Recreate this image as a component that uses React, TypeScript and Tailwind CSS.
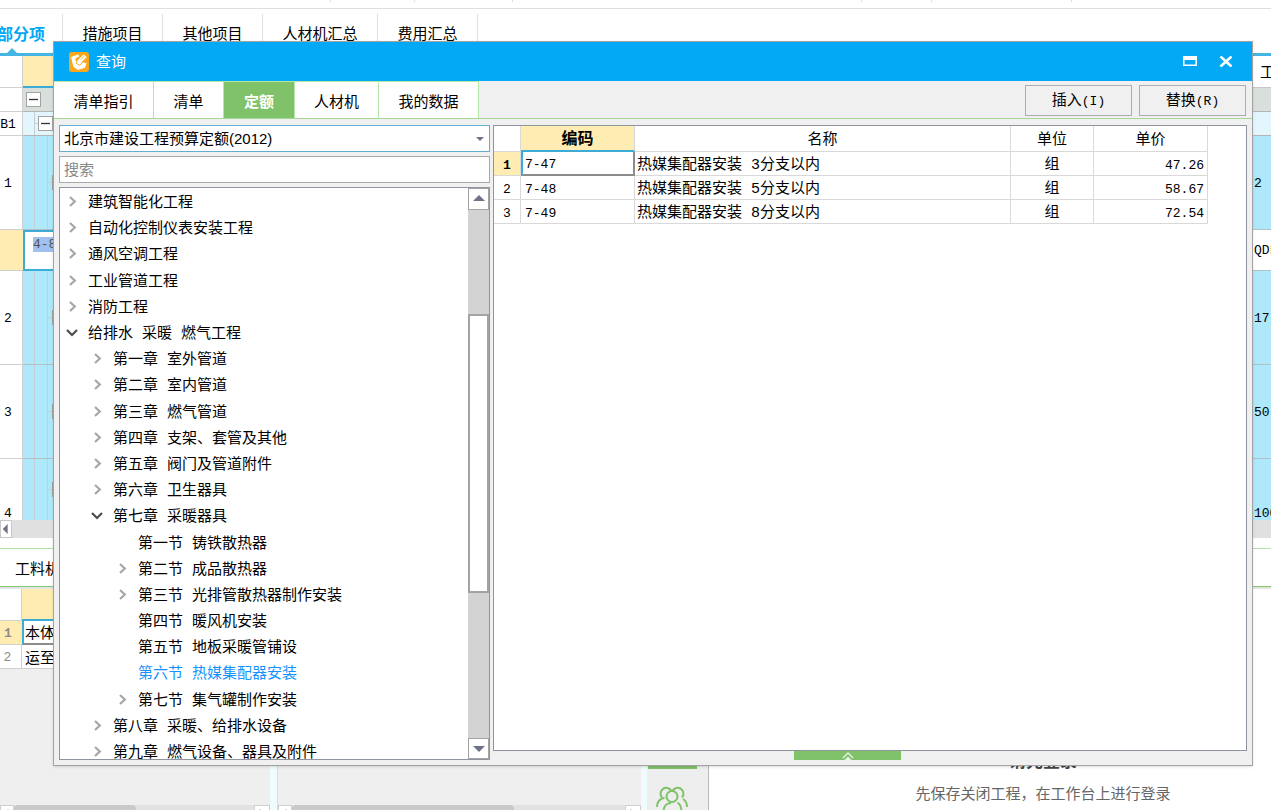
import { useState } from "react";
import clsx from "clsx";

type TreeNode = { label: string; level: 0 | 1 | 2; state: "open" | "closed" | "leaf" };

const tree: TreeNode[] = [
  { label: "建筑智能化工程", level: 0, state: "closed" },
  { label: "自动化控制仪表安装工程", level: 0, state: "closed" },
  { label: "通风空调工程", level: 0, state: "closed" },
  { label: "工业管道工程", level: 0, state: "closed" },
  { label: "消防工程", level: 0, state: "closed" },
  { label: "给排水 采暖 燃气工程", level: 0, state: "open" },
  { label: "第一章 室外管道", level: 1, state: "closed" },
  { label: "第二章 室内管道", level: 1, state: "closed" },
  { label: "第三章 燃气管道", level: 1, state: "closed" },
  { label: "第四章 支架、套管及其他", level: 1, state: "closed" },
  { label: "第五章 阀门及管道附件", level: 1, state: "closed" },
  { label: "第六章 卫生器具", level: 1, state: "closed" },
  { label: "第七章 采暖器具", level: 1, state: "open" },
  { label: "第一节 铸铁散热器", level: 2, state: "leaf" },
  { label: "第二节 成品散热器", level: 2, state: "closed" },
  { label: "第三节 光排管散热器制作安装", level: 2, state: "closed" },
  { label: "第四节 暖风机安装", level: 2, state: "leaf" },
  { label: "第五节 地板采暖管铺设", level: 2, state: "leaf" },
  { label: "第六节 热媒集配器安装", level: 2, state: "leaf" },
  { label: "第七节 集气罐制作安装", level: 2, state: "closed" },
  { label: "第八章 采暖、给排水设备", level: 1, state: "closed" },
  { label: "第九章 燃气设备、器具及附件", level: 1, state: "closed" },
];

const indent = ["pl-[6px]", "pl-[31px]", "pl-[56px]"];

const quotas = [
  { code: "7-47", name: "热媒集配器安装 3分支以内", unit: "组", price: "47.26" },
  { code: "7-48", name: "热媒集配器安装 5分支以内", unit: "组", price: "58.67" },
  { code: "7-49", name: "热媒集配器安装 8分支以内", unit: "组", price: "72.54" },
];

const pageTabs = [
  { label: "措施项目", width: "w-[100px]" },
  { label: "其他项目", width: "w-[100px]" },
  { label: "人材机汇总", width: "w-[115px]" },
  { label: "费用汇总", width: "w-[100px]" },
];

const dialogTabs = [
  { label: "清单指引", width: "w-[100px]" },
  { label: "清单", width: "w-[70px]" },
  { label: "定额", width: "w-[71px]" },
  { label: "人材机", width: "w-[84px]" },
  { label: "我的数据", width: "w-[100px]" },
];

function Chevron({ state }: { state: TreeNode["state"] }) {
  return (
    <svg className="size-3 shrink-0" viewBox="0 0 12 12" fill="none" strokeWidth="2.2">
      {state === "closed" && <path d="M4 1 8.800 5.500 4 10" stroke="#a6a6a6" />}
      {state === "open" && <path d="M1 3 6 8 11 3" stroke="#4d4d4d" />}
    </svg>
  );
}

function Arrow({ dir, className }: { dir: "up" | "down" | "left" | "right"; className?: string }) {
  const points = {
    up: "0,8 6,2 12,8",
    down: "0,3 12,3 6,9",
    left: "8,0 2,6 8,12",
    right: "4,0 10,6 4,12",
  };
  return (
    <svg className={clsx("shrink-0", className)} viewBox="0 0 12 12" fill="#6f7388">
      <polygon points={points[dir]} />
    </svg>
  );
}

function Toggle() {
  return (
    <svg className="size-[15px] shrink-0" viewBox="0 0 15 15">
      <rect x="0.5" y="0.5" width="14" height="14" fill="#fff" stroke="#a3a3a3" />
      <path d="M3 7.5h9" stroke="#333" strokeWidth="1.3" />
    </svg>
  );
}

// guide lines of the outline column, with the box of a child item
function Branch({ height }: { height: string }) {
  return (
    <div className={clsx("flex items-center", height)}>
      <div className="h-full w-3 shrink-0 border-r border-[#c3cfd4]" />
      <div className="h-full w-[13px] shrink-0 border-r border-[#c3cfd4]" />
      <div className="h-px w-1 shrink-0 bg-[#c3cfd4]" />
      <div className="size-[15px] shrink-0 border border-[#a3a3a3] bg-white" />
    </div>
  );
}

const num = "border-r border-b border-[#d0d0d0] bg-white p-0 text-center";
const cyan = "border-b border-[#b4bfc4] bg-[#aee8fb] p-0";

function MainGrid() {
  const tall = [
    { n: "2", value: "17", height: "h-[93px]" },
    { n: "3", value: "50", height: "h-[93px]" },
  ];
  return (
    <table className="w-full shrink-0 table-fixed border-separate border-spacing-0 font-['Liberation_Mono','Noto_Sans_CJK_SC',monospace] text-[13px] leading-4">
      <colgroup>
        <col className="w-[23px]" />
        <col />
        <col className="w-[19px]" />
      </colgroup>
      <thead>
        <tr className="h-8">
          <th className={num} />
          <th className="border-b-2 border-[#3cabd6] bg-[#ffecb3] p-0" />
          <th className="overflow-hidden border-b border-[#c8c8c8] p-0 pt-1 pl-2 text-left text-[15px] font-normal">工</th>
        </tr>
      </thead>
      <tbody>
        <tr className="h-6">
          <td className={num} />
          <td className="border-b border-[#b5b5b5] bg-[#d9dfdb] p-0 pl-[3px]">
            <Toggle />
          </td>
          <td className="border-b border-[#b5b5b5] bg-[#d9dfdb] p-0" />
        </tr>
        <tr className="h-6">
          <td className={clsx(num, "pt-0.5 pr-1.5")}>B1</td>
          <td className="border-b border-[#b5b5b5] bg-[#e4f6fd] p-0">
            <div className="flex h-[23px] items-center">
              <div className="h-full w-3 border-r border-[#c3cfd4]" />
              <div className="h-px w-[3px] bg-[#c3cfd4]" />
              <Toggle />
            </div>
          </td>
          <td className="border-b border-[#b5b5b5] bg-[#e4f6fd] p-0" />
        </tr>
        <tr>
          <td className={clsx(num, "pt-0.5 pr-1.5")}>1</td>
          <td className={cyan}>
            <Branch height="h-[93px]" />
          </td>
          <td className={clsx(cyan, "pt-0.5 pl-0.5")}>2</td>
        </tr>
        <tr className="h-[41px]">
          <td className="border-b border-[#d0d0d0] bg-[#ffecb3] p-0" />
          <td className="border-2 border-[#3cabd6] bg-white p-0 pb-3 pl-2">
            <span className="bg-[#a0c1f0] text-[#555]">4-8</span>
          </td>
          <td className="overflow-hidden border-b border-[#b4bfc4] p-0 pt-0.5 pl-0.5">QDL</td>
        </tr>
        {tall.map((row) => (
          <tr key={row.n}>
            <td className={clsx(num, "pt-0.5 pr-1.5")}>{row.n}</td>
            <td className={cyan}>
              <Branch height={row.height} />
            </td>
            <td className={clsx(cyan, "pt-0.5 pl-0.5")}>{row.value}</td>
          </tr>
        ))}
        <tr className="leading-3">
          <td className="border-r border-[#d0d0d0] p-0 pr-1.5 text-center align-bottom">4</td>
          <td className="bg-[#aee8fb] p-0">
            <Branch height="h-[61px]" />
          </td>
          <td className="overflow-hidden bg-[#aee8fb] p-0 pl-0.5 align-bottom">100</td>
        </tr>
      </tbody>
    </table>
  );
}

function BottomScroll({ thumb }: { thumb: string }) {
  return (
    <div className="flex h-[5px] items-start overflow-hidden bg-[#e2e2e2]">
      <button aria-label="向左" className="h-4 w-[14px] border border-[#d0d0d0] bg-white">
        <Arrow dir="left" className="ml-0.5 size-2" />
      </button>
      <div className={clsx("h-4 rounded-sm bg-[#c9c9c9]", thumb)} />
      <div className="flex-1" />
      <button aria-label="向右" className="h-4 w-4 border border-[#d0d0d0] bg-white">
        <Arrow dir="right" className="ml-0.5 size-2" />
      </button>
    </div>
  );
}

function LowerPane() {
  return (
    <div className="flex min-h-0 flex-1">
      <div className="flex w-[270px] flex-col bg-[#efefef]">
        <table className="w-full table-fixed border-separate border-spacing-0 text-[15px]">
          <colgroup>
            <col className="w-[22px]" />
            <col />
          </colgroup>
          <thead>
            <tr className="h-8">
              <th className={num} />
              <th className="border-b-2 border-[#3cabd6] bg-[#ffecb3] p-0" />
            </tr>
          </thead>
          <tbody>
            <tr className="h-6">
              <td className="border-b border-[#d0d0d0] bg-[#ffecb3] p-0 pt-0.5 pr-1.5 text-center font-['Liberation_Mono',monospace] text-[13px] leading-5 font-bold text-[#8c8c8c]">
                1
              </td>
              <td className="border-b-2 border-l-2 border-b-[#8c8c8c] border-l-[#3cabd6] bg-white p-0 pt-0.5 pl-px leading-5">
                本体安装
              </td>
            </tr>
            <tr className="h-6">
              <td className={clsx(num, "pt-0.5 pr-1.5 font-['Liberation_Mono',monospace] text-[13px] leading-5 text-[#8c8c8c]")}>
                2
              </td>
              <td className="border-b border-[#d0d0d0] bg-white p-0 pt-0.5 pl-[3px] leading-5">运至现场</td>
            </tr>
          </tbody>
        </table>
        <div className="flex-1" />
        <BottomScroll thumb="w-[122px]" />
      </div>
      <div className="w-[7px] bg-[#effbff]" />
      <div className="flex w-[364px] flex-col justify-end border-l border-[#dcdcdc] bg-[#efefef]">
        <BottomScroll thumb="w-[222px]" />
      </div>
      <div className="w-1.5 bg-[#effbff]" />
      <div className="flex w-[62px] flex-col justify-end border-r border-[#b8b8b8] bg-[#eeeeee]">
        <div className="mb-4 ml-px h-2 w-[49px] bg-[#7fc269]" />
        <button aria-label="联系人" className="ml-[9px] h-[25px] w-8 overflow-hidden">
          <svg className="h-[30px] w-8" viewBox="0 0 32 30" fill="none" stroke="#7fc269" strokeWidth="2">
            <path d="M6 12.500a5.800 5.800 0 1 1 9.500-6.500" />
            <path d="M16.500 6a5.800 5.800 0 1 1 9.500 6.500" />
            <circle cx="16" cy="11.5" r="5.5" />
            <path d="M1 22c0-5 3-8.500 7.500-9.300" />
            <path d="M31 22c0-3.500-1.500-6.500-4-8" />
            <path d="M7.500 27c0-5.500 3-9 7.500-9" />
            <path d="M21.500 17.500c3 2 4 5 4 9.500" />
          </svg>
        </button>
      </div>
      <div className="flex flex-1 flex-col items-center justify-end gap-2 pb-1 pl-[106px]">
        <h2 className="text-[17px] leading-6 font-bold text-[#444]">请先登录</h2>
        <p className="text-[15px] leading-6 text-[#666]">先保存关闭工程，在工作台上进行登录</p>
      </div>
    </div>
  );
}

function Page() {
  return (
    <div className="flex h-full flex-col">
      <div className="flex h-[9px] shrink-0 items-start border-b border-[#dedede]">
        <div className="h-0.5 w-[331px] border-r border-[#dedede]" />
        <div className="h-0.5 w-[84px] border-r border-[#dedede]" />
        <div className="h-0.5 w-[98px] border-r border-[#dedede]" />
        <div className="h-0.5 w-[349px] border-r border-[#dedede]" />
        <div className="h-0.5 w-[70px] border-r border-[#dedede]" />
        <div className="h-0.5 w-[140px] border-r border-[#dedede]" />
      </div>
      <nav className="flex h-[47px] shrink-0 border-b-[3px] border-[#45b6e4] pt-[5px]">
        <button className="relative flex w-[63px] items-center justify-end border-r border-[#dedede] pt-0.5 pr-[17px] text-[16px] font-bold whitespace-nowrap text-[#03a9f4]">
          部分项
          <svg className="absolute bottom-0 left-[7px] h-[5px] w-2.5" viewBox="0 0 10 5" fill="#45b6e4">
            <polygon points="0,5 5,0 10,5" />
          </svg>
        </button>
        {pageTabs.map((tab) => (
          <button key={tab.label} className={clsx("border-r border-[#dedede] pt-0.5 text-[15px]", tab.width)}>
            {tab.label}
          </button>
        ))}
      </nav>
      <MainGrid />
      <div className="flex h-[18px] shrink-0 bg-[#e0e0e0]">
        <button aria-label="向左滚动" className="flex w-3 items-center border border-[#c8c8c8] bg-white">
          <Arrow dir="left" className="size-2.5" />
        </button>
      </div>
      <div className="h-[11px] shrink-0 border-b border-[#b4e2a6]" />
      <div className="flex h-[38px] shrink-0 items-center border-b border-[#7fc96c] pt-1 pl-[15px]">
        <button className="text-[15px]">工料机显示</button>
      </div>
      <div className="h-0.5 shrink-0 bg-[#e4e4e4]" />
      <LowerPane />
    </div>
  );
}

function TitleBar() {
  return (
    <header className="flex h-[39px] shrink-0 items-center bg-[#03a9f4] pr-[19px] pl-[15px] text-white">
      <svg className="size-5" viewBox="0 0 20 20">
        <rect width="20" height="20" rx="3" fill="#fba71b" />
        <path
          d="M2 5 9 2.500l1.500 1.700-4.300 2.500 1.200 3.800 5.800-.6 4.300 1.300-1.500 4.600-7 2.200-4.600-3.200z"
          fill="#fff"
        />
        <path d="m7 11 3.500 2.300L17 7" fill="none" stroke="#fba71b" strokeWidth="1" />
        <path d="m8.500 8.500 6-6 3.200 2.500-6.200 6.300-2.700.7z" fill="#fff" />
        <path d="m11.500 7.500 4-3.500" fill="none" stroke="#fba71b" strokeWidth="0.8" />
      </svg>
      <h1 className="ml-[7px] flex-1 pt-0.5 text-[15px]">查询</h1>
      <button aria-label="最大化" className="mr-[22px]">
        <svg className="h-[11px] w-[14px]" viewBox="0 0 14 11">
          <path d="M.8 1v8.200h12.400V1" fill="none" stroke="#fff" strokeWidth="1.500" />
          <rect width="14" height="4" fill="#fff" />
        </svg>
      </button>
      <button aria-label="关闭">
        <svg className="h-[11px] w-[14px]" viewBox="0 0 14 11" stroke="#fff" strokeWidth="2.600">
          <path d="m1.500.5 11 10m0-10-11 10" />
        </svg>
      </button>
    </header>
  );
}

function QuotaTree() {
  const [selected, setSelected] = useState("第六节 热媒集配器安装");

  return (
    <div className="flex min-h-0 flex-1 overflow-hidden border border-[#8e959f] bg-white">
      <div className="min-w-0 flex-1 overflow-hidden pt-px">
        <ul className="flex h-[576px] flex-col font-['Liberation_Mono','Noto_Sans_CJK_SC',monospace] text-[15px] leading-5">
          {tree.map((node) => (
            <li key={node.label} className="flex flex-1">
              <button
                onClick={() => setSelected(node.label)}
                className={clsx(
                  "flex w-full items-center gap-2.5 text-left whitespace-nowrap",
                  indent[node.level],
                  node.label === selected && "text-[#1493ff]"
                )}
              >
                <Chevron state={node.state} />
                <span className="pt-1">{node.label}</span>
              </button>
            </li>
          ))}
        </ul>
      </div>
      <div className="flex w-[21px] flex-col bg-[#d3d3d3]">
        <button aria-label="向上滚动" className="flex h-[22px] items-center justify-center border border-[#a3a3a3] bg-white">
          <Arrow dir="up" className="size-3" />
        </button>
        <div className="flex-[105]" />
        <div className="flex-[277] border-2 border-[#a3a3a3] bg-white" />
        <div className="flex-[146]" />
        <button aria-label="向下滚动" className="flex h-[21px] items-center justify-center border border-[#a3a3a3] bg-white">
          <Arrow dir="down" className="size-3" />
        </button>
      </div>
    </div>
  );
}

function QuotaTable() {
  const head = "border-r border-b border-[#d9d9d9] p-0 pt-1 font-normal";
  const cell = "border-r border-b border-[#d9d9d9] p-0 pt-1";
  return (
    <table className="w-[714px] table-fixed border-separate border-spacing-0 font-['Liberation_Mono','Noto_Sans_CJK_SC',monospace] text-[15px] leading-[18px]">
      <colgroup>
        <col className="w-[27px]" />
        <col className="w-[114px]" />
        <col className="w-[376px]" />
        <col className="w-[83px]" />
        <col className="w-[114px]" />
      </colgroup>
      <thead>
        <tr className="h-[26px]">
          <th className={head} />
          <th className="border-r border-b-2 border-r-[#d9d9d9] border-b-[#3cabd6] bg-[#ffecb3] p-0 pt-1 text-[16px] font-bold">
            编码
          </th>
          <th className={head}>名称</th>
          <th className={head}>单位</th>
          <th className={head}>单价</th>
        </tr>
      </thead>
      <tbody>
        {quotas.map((q, i) => (
          <tr key={q.code} className="h-6">
            <td className={clsx(cell, "text-center text-[13px]", i === 0 && "bg-[#ffecb3] font-bold")}>{i + 1}</td>
            <td
              className={clsx(
                "p-0 pt-1 text-[13px]",
                i === 0
                  ? "border-r-2 border-b-2 border-l-2 border-r-[#8c8c8c] border-b-[#8c8c8c] border-l-[#3cabd6] pl-0.5"
                  : "border-r border-b border-[#d9d9d9] pl-1"
              )}
            >
              {q.code}
            </td>
            <td className={clsx(cell, "pl-0.5")}>{q.name}</td>
            <td className={clsx(cell, "text-center")}>{q.unit}</td>
            <td className={clsx(cell, "pr-[3px] text-right text-[13px]")}>{q.price}</td>
          </tr>
        ))}
      </tbody>
    </table>
  );
}

function QueryDialog() {
  const [tab, setTab] = useState("定额");

  return (
    <section
      role="dialog"
      aria-label="查询"
      className="absolute top-[41px] right-[18px] bottom-[44px] left-[53px] flex flex-col border border-[#a3a3a3] bg-[#f0f0f0] shadow-sm"
    >
      <TitleBar />
      <div className="flex h-[38px] shrink-0 border-b border-[#a3d796]">
        {dialogTabs.map((t) => (
          <button
            key={t.label}
            onClick={() => setTab(t.label)}
            className={clsx(
              "border-t border-r border-[#b5e8a6] pt-1 text-[15px]",
              t.width,
              tab === t.label ? "bg-[#7fc269] font-bold text-white" : "bg-white"
            )}
          >
            {t.label}
          </button>
        ))}
        <div className="flex flex-1 items-center justify-end gap-[7px] pt-px pr-1.5 text-[15px]">
          <button className="h-[31px] w-[107px] border border-[#adadad]">
            插入<span className="font-['Liberation_Mono',monospace] text-[13px]">(I)</span>
          </button>
          <button className="h-[31px] w-[107px] border border-[#adadad]">
            替换<span className="font-['Liberation_Mono',monospace] text-[13px]">(R)</span>
          </button>
        </div>
      </div>
      <div className="flex min-h-0 flex-1 gap-[3px] px-[5px] pt-1.5 pb-[5px]">
        <div className="flex w-[431px] shrink-0 flex-col gap-1">
          <div className="relative h-[27px] shrink-0">
            <select
              aria-label="定额库"
              className="h-full w-full appearance-none border border-[#64aed2] bg-white pl-1 text-[15px] leading-6 outline-none"
            >
              <option>北京市建设工程预算定额(2012)</option>
            </select>
            <Arrow dir="down" className="pointer-events-none absolute top-2.5 right-1.5 size-2" />
          </div>
          <input
            type="text"
            aria-label="搜索"
            placeholder="搜索"
            className="h-[27px] w-full shrink-0 border border-[#a9a9a9] bg-white pl-1 text-[15px] outline-none placeholder:text-[#888]"
          />
          <QuotaTree />
        </div>
        <div className="flex min-w-0 flex-1 flex-col">
          <div className="min-h-0 w-full flex-1 overflow-hidden border border-[#8e959f] bg-white">
            <QuotaTable />
          </div>
          <div className="flex justify-center pr-[45px]">
            <button aria-label="展开" className="flex h-[9px] w-[107px] justify-center bg-[#7fc269]">
              <svg className="h-[9px] w-3" viewBox="0 0 12 9" fill="none" stroke="#e6f5e1" strokeWidth="1.300">
                <path d="m1 7 5-5 5 5" />
                <path d="m3.500 9 2.500-2.500L8.500 9z" fill="#fff" />
              </svg>
            </button>
          </div>
        </div>
      </div>
    </section>
  );
}

export default function App() {
  return (
    <main className="relative h-screen overflow-hidden bg-white font-['Liberation_Sans','Noto_Sans_CJK_SC',sans-serif] text-black">
      <Page />
      <QueryDialog />
    </main>
  );
}
